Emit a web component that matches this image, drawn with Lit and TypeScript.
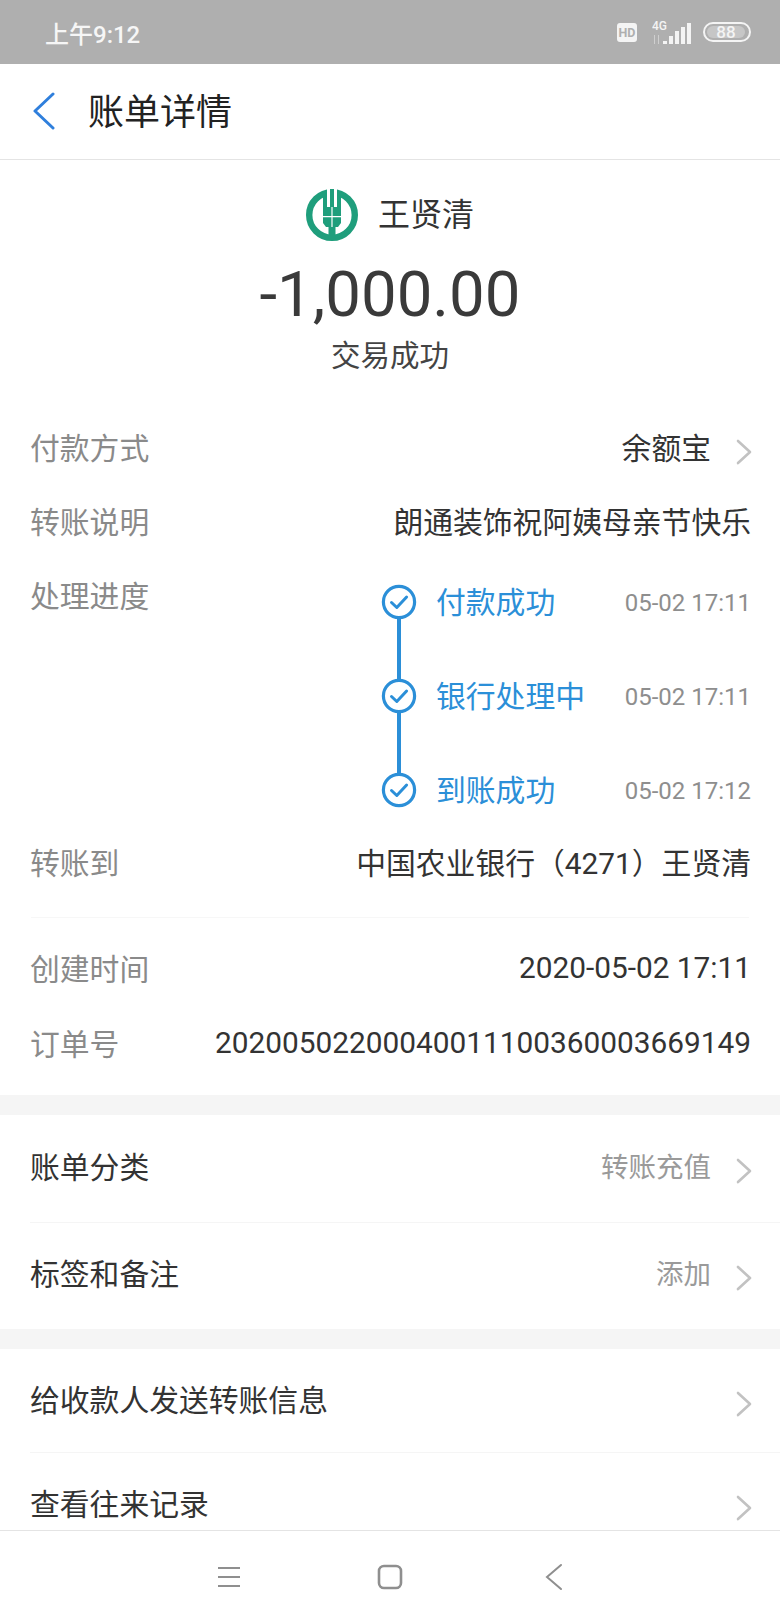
import { LitElement, css, html, svg } from "lit";
import { customElement } from "lit/decorators.js";

const chevron = html`<svg class="chev" viewBox="0 0 16 26" fill="none" stroke="#c2c2c2" stroke-width="2.6" stroke-linecap="round" stroke-linejoin="round"><path d="M2 2l12 11L2 24"/></svg>`;

const check = svg`<circle cx="18" cy="18" r="15.6" fill="#fff" stroke="#2b8fd8" stroke-width="3.2"/><path d="M10.5 18.5l5.3 5 9.8-10.5" fill="none" stroke="#2b8fd8" stroke-width="3" stroke-linecap="round" stroke-linejoin="round"/>`;

const steps = [
  { name: "付款成功", time: "05-02 17:11" },
  { name: "银行处理中", time: "05-02 17:11" },
  { name: "到账成功", time: "05-02 17:12" },
];

@customElement("app-root")
export class AppRoot extends LitElement {
  static styles = css`
    :host {
      display: flex;
      flex-direction: column;
      height: 1624px;
      overflow: hidden;
      background: #fff;
      font-family: Roboto, "Noto Sans CJK SC", sans-serif;
      color: #333;
    }
    .status {
      height: 64px;
      flex: none;
      background: #afafaf;
      color: #f6f6f6;
      display: flex;
      align-items: center;
      justify-content: space-between;
      padding: 0 29px 0 45px;
      box-sizing: border-box;
      font-size: 24px;
      font-weight: 500;
    }
    .status-icons {
      display: flex;
      align-items: center;
      gap: 12px;
    }
    .hd {
      margin-right: 3px;
    }
    .nav {
      height: 96px;
      flex: none;
      box-sizing: border-box;
      border-bottom: 1px solid #e4e4e4;
      display: flex;
      align-items: center;
      padding-left: 32px;
      font-size: 36px;
      color: #222;
    }
    .nav span {
      padding-bottom: 6px;
    }
    .nav svg {
      width: 24px;
      height: 38px;
      margin-right: 32px;
      margin-bottom: 2px;
    }
    .content {
      flex: 1;
      overflow: hidden;
      min-height: 0;
    }
    .summary {
      height: 252px;
      display: flex;
      flex-direction: column;
      align-items: center;
    }
    .payee {
      display: flex;
      align-items: center;
      gap: 20px;
      font-size: 32px;
      color: #333;
      margin-top: 29px;
      height: 52px;
    }
    .payee span {
      padding-bottom: 6px;
    }
    .payee svg {
      width: 52px;
      height: 52px;
    }
    .amount {
      font-size: 63.5px;
      line-height: 76px;
      margin-top: 16px;
      color: #3a3a3a;
    }
    .state {
      font-size: 29.5px;
      line-height: 44px;
      margin-top: 1px;
      color: #444;
    }
    .row {
      display: flex;
      align-items: center;
      justify-content: space-between;
      box-sizing: border-box;
      height: 74px;
      padding: 0 29px 6px 30px;
      font-size: 29.8px;
      color: #333;
    }
    .row.order {
      padding-bottom: 4px;
    }
    .label {
      color: #8a8a8a;
    }
    .value {
      display: flex;
      align-items: center;
    }
    .chev {
      width: 16px;
      height: 26px;
      margin-left: 25px;
      margin-top: 11px;
      flex: none;
    }
    .row.has-chev {
      padding-right: 28px;
    }
    .progress {
      display: flex;
      justify-content: space-between;
      box-sizing: border-box;
      padding: 0 29px 0 30px;
      height: 267px;
      font-size: 29.8px;
    }
    .progress .label {
      line-height: 74px;
    }
    .steps {
      width: 370px;
      padding-top: 5px;
    }
    .step {
      display: flex;
      align-items: center;
      height: 74px;
      margin-bottom: 20px;
      position: relative;
      color: #2b8fd8;
    }
    .step:last-child {
      margin-bottom: 0;
    }
    .step svg {
      width: 36px;
      height: 36px;
      flex: none;
      margin-right: 19px;
      position: relative;
    }
    .step:not(:last-child)::before {
      content: "";
      position: absolute;
      left: 16px;
      top: 50%;
      width: 4px;
      height: 94px;
      background: #2b8fd8;
    }
    .step-name {
      flex: 1;
      padding-bottom: 5px;
    }
    .step-time {
      font-size: 24px;
      color: #8e8e8e;
      padding-top: 2px;
    }
    .rule {
      height: 1px;
      background: #f7f7f7;
      margin: 16px 31px 15px;
    }
    .spacer {
      height: 14px;
    }
    .gap {
      height: 20px;
      background: #f5f5f5;
    }
    .item {
      display: flex;
      align-items: center;
      justify-content: space-between;
      height: 106px;
      margin-left: 30px;
      padding: 0 28px 5px 0;
      font-size: 29.8px;
      color: #333;
      border-bottom: 1px solid #f5f5f5;
      box-sizing: border-box;
    }
    .item.first {
      height: 108px;
      padding-bottom: 7px;
    }
    .item.short {
      height: 104px;
    }
    .item.flat {
      border-bottom: none;
      padding-bottom: 8px;
    }
    .muted {
      color: #9a9a9a;
      font-size: 27.5px;
    }
    .tabs {
      height: 94px;
      flex: none;
      box-sizing: border-box;
      border-top: 1px solid #e4e4e4;
      display: flex;
      align-items: center;
      justify-content: center;
      gap: 132px;
      padding-bottom: 2px;
    }
    .tabs svg {
      width: 30px;
      height: 30px;
    }
  `;

  render() {
    return html`
      <div class="status">
        <span>上午9:12</span>
        <div class="status-icons">
          <svg class="hd" width="20" height="19" viewBox="0 0 20 19">
            <rect width="20" height="19" rx="3" fill="#f4f4f4"/>
            <text x="10" y="14" text-anchor="middle" font-size="12.5" font-weight="700" fill="#afafaf">HD</text>
          </svg>
          <svg width="39" height="25" viewBox="0 0 39 25">
            <text x="0" y="10" font-size="12" font-weight="500" fill="#f4f4f4">4G</text>
            <path d="M2 15h1v9H2zM6 15h1v9H6z" fill="#cfcfcf"/>
            <path d="M11 21h4v3h-4zM17 16h4v8h-4zM23 11h4v13h-4zM29 7h4v17h-4zM35 3h4v21h-4z" fill="#f4f4f4"/>
          </svg>
          <svg width="48" height="20" viewBox="0 0 48 20">
            <rect x="1" y="1" width="46" height="18" rx="9" fill="none" stroke="#f4f4f4" stroke-width="2"/>
            <rect x="4" y="4" width="38" height="12" rx="6" fill="#c6c6c6"/>
            <text x="23" y="15.500" text-anchor="middle" font-size="17" font-weight="500" fill="#f4f4f4">88</text>
          </svg>
        </div>
      </div>
      <div class="nav">
        <svg viewBox="0 0 24 38" fill="none" stroke="#2f7fdc" stroke-width="3" stroke-linecap="round" stroke-linejoin="round"><path d="M21 2L3 19l18 17"/></svg>
        <span>账单详情</span>
      </div>
      <div class="content">
        <div class="summary">
          <div class="payee">
            <svg viewBox="0 0 52 52">
              <circle cx="26" cy="26" r="22.800" fill="none" stroke="#1f9e7c" stroke-width="6.400"/>
              <path d="M21 0h10v18H21z" fill="#fff"/>
              <path d="M24 0h4v19h-4zM17 4h4v15h-4zM31 4h4v15h-4zM22.500 36h7v14h-7z" fill="#1f9e7c"/>
              <path d="M17 18h18v16l-3 4H20l-3-4z" fill="#1f9e7c"/>
              <path d="M25.400 18h1.200v20h-1.200zM17 27h18v1.200H17z" fill="#fff"/>
            </svg>
            <span>王贤清</span>
          </div>
          <div class="amount">-1,000.00</div>
          <div class="state">交易成功</div>
        </div>
        <div class="row has-chev">
          <span class="label">付款方式</span>
          <span class="value">余额宝${chevron}</span>
        </div>
        <div class="row">
          <span class="label">转账说明</span>
          <span class="value">朗通装饰祝阿姨母亲节快乐</span>
        </div>
        <div class="progress">
          <span class="label">处理进度</span>
          <div class="steps">
            ${steps.map(
              (s) => html`<div class="step">
                <svg viewBox="0 0 36 36">${check}</svg>
                <span class="step-name">${s.name}</span>
                <span class="step-time">${s.time}</span>
              </div>`,
            )}
          </div>
        </div>
        <div class="row">
          <span class="label">转账到</span>
          <span class="value">中国农业银行（4271）王贤清</span>
        </div>
        <div class="rule"></div>
        <div class="row">
          <span class="label">创建时间</span>
          <span class="value">2020-05-02 17:11</span>
        </div>
        <div class="row order">
          <span class="label">订单号</span>
          <span class="value">20200502200040011100360003669149</span>
        </div>
        <div class="spacer"></div>
        <div class="gap"></div>
        <div class="item first">
          <span>账单分类</span>
          <span class="value muted">转账充值${chevron}</span>
        </div>
        <div class="item flat">
          <span>标签和备注</span>
          <span class="value muted">添加${chevron}</span>
        </div>
        <div class="gap"></div>
        <div class="item short">
          <span>给收款人发送转账信息</span>
          ${chevron}
        </div>
        <div class="item flat">
          <span>查看往来记录</span>
          ${chevron}
        </div>
      </div>
      <div class="tabs">
        <svg viewBox="0 0 30 30" fill="none" stroke="#8f8f8f" stroke-width="2"><path d="M5 6h22M5 15h22M5 24h22"/></svg>
        <svg viewBox="0 0 30 30" fill="none" stroke="#8f8f8f" stroke-width="2.6"><rect x="4" y="4" width="22" height="22" rx="5"/></svg>
        <svg viewBox="0 0 30 30" fill="none" stroke="#8f8f8f" stroke-width="2" stroke-linecap="round"><path d="M24 3L10 15l14 12"/></svg>
      </div>
    `;
  }
}
